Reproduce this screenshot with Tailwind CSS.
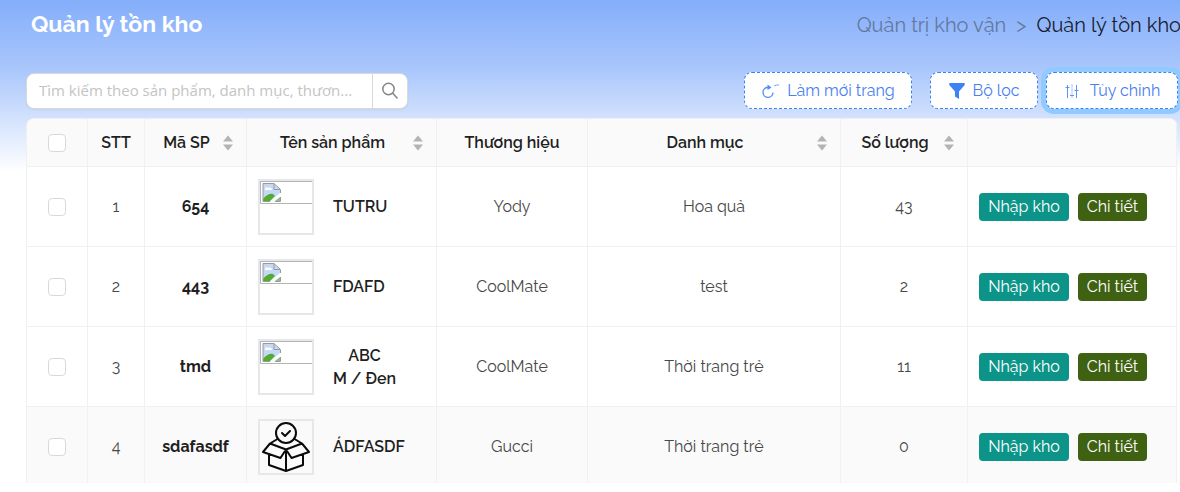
<!DOCTYPE html>
<html lang="vi">
<head>
<meta charset="utf-8">
<meta name="viewport" content="width=device-width, initial-scale=1">
<title>Quản lý tồn kho</title>
<script src="https://cdn.jsdelivr.net/npm/@tailwindcss/browser@4"></script>
</head>
<body class="bg-white font-[Raleway,Lato,'Open_Sans',sans-serif] text-[#1f1f1f]">
<svg class="hidden" xmlns="http://www.w3.org/2000/svg">
  <symbol id="sorter" viewBox="0 0 10 16"><path d="M5 .5 10 6.500H0zM5 15.500 0 9.500h10z" fill="#b3b3b3"/></symbol>
  <symbol id="broken" viewBox="0 0 52 52">
    <path d="M52 .5H.5v22H52" fill="none" stroke="#b5b5b5"/>
    <path d="M3 3h11l6 5v4l-10 8H3z" fill="#c5d8f5"/>
    <path d="M3 20v-2c3-4 7-6 10-5l2 2-5 5z" fill="#55ab32"/>
    <path d="M5 8c0-2 2-2 3-1 2-1 4 0 4 2H5z" fill="#fff"/>
    <path d="M20 16v4h-5z" fill="#8fbf80"/>
    <path d="M3 20.500V2.500h11l6.500 6V12M14 3v5.500h6M20.500 16v4.500H15M3 20.500h7" fill="none" stroke="#9a9a9a"/>
  </symbol>
  <symbol id="box" viewBox="0 0 52 52" fill="none" stroke="#0a0a0a" stroke-width="2" stroke-linejoin="round" stroke-linecap="round">
    <circle cx="26" cy="12" r="10"/><path d="m22 12 3 3 5-5"/>
    <path d="M17.500 18 10 22.500l16 6 16-6L34.500 18M10 22.500 3 31l17.500 6L26 28.500l5.500 8.500L49 31l-7-8.500M9 33.500V44l17 6 17-6V33.500M26 28.500V50"/>
  </symbol>
</svg>
<main class="flex h-screen flex-col overflow-hidden bg-[linear-gradient(#84aefa_0,#a9c6fc_68px,#ffffff_172px)] pr-[3px] pb-[9px] pl-[26px]">
  <header class="flex h-[49px] shrink-0 items-center justify-between pl-[5px] whitespace-nowrap">
    <h1 class="text-[23px] font-bold text-white">Quản lý tồn kho</h1>
    <nav aria-label="Breadcrumb" class="-mr-1 flex gap-2.5 text-xl">
      <a href="#" class="text-[#64779f]">Quản trị kho vận</a><span class="text-[#64779f]">&gt;</span><a href="#" aria-current="page" class="text-[#18202f]">Quản lý tồn kho</a>
    </nav>
  </header>
  <div class="mt-[23px] flex shrink-0 items-center justify-between">
    <form class="flex h-9 w-[382px] rounded-lg border border-[#d9d9d9] bg-white shadow-xs">
      <input type="text" aria-label="Tìm kiếm" placeholder="Tìm kiếm theo sản phẩm, danh mục, thươn..." class="min-w-0 flex-1 rounded-l-lg pl-3 font-['Open_Sans',sans-serif] text-[15px] outline-none placeholder:text-[#c4c4c4]">
      <button type="button" aria-label="Tìm" class="grid w-[35px] place-items-center border-l border-[#d9d9d9]">
        <svg class="size-[18px]" viewBox="0 0 18 18" fill="none" stroke="#858585" stroke-width="1.500"><circle cx="7.500" cy="7" r="5.700"/><path d="m11.500 11 5 5.500"/></svg>
      </button>
    </form>
    <div class="-mr-px flex gap-[18px] text-base text-[#4880f0]">
      <button type="button" class="flex h-[37px] w-[168px] items-center justify-center gap-2 rounded-lg border border-dashed border-[#3b82f6] bg-white">
        <svg class="h-4 w-[18px]" viewBox="0 0 18 16" fill="none" stroke="#4c8df6" stroke-width="1.300"><path d="M6 4.500a5 5 0 1 0 6 5M4.500 4.500H9"/><path d="M6.500 1.500 10.500 4.500 6.500 7z" fill="#4c8df6" stroke="none"/><path d="M13 3q2-1.500 5-1" stroke-width=".8"/></svg>
        Làm mới trang</button>
      <button type="button" class="flex h-[37px] w-[108px] items-center justify-center gap-2 rounded-lg border border-dashed border-[#3b82f6] bg-white">
        <svg class="size-4" viewBox="0 0 16 16" fill="#3b82f6"><path d="M.3 0h15.400v2L10 8.500V16l-4-2.500v-5L.3 2z"/></svg>
        Bộ lọc</button>
      <button type="button" class="-ml-2.5 flex h-[37px] w-[132px] items-center justify-center gap-2.5 rounded-lg border border-dashed border-[#3b82f6] bg-white ring-[5px] ring-[#91caff]">
        <svg class="size-4" viewBox="0 0 16 16" fill="none" stroke="#5b96f7"><path d="M3.500 2v13M1.500 4.500h4M12.500 2v13M10.500 7.500h4"/><path d="M8 1v14" stroke="#a9c8fb"/><path d="M6 12.500h4"/></svg>
        Tùy chỉnh</button>
    </div>
  </div>
  <div class="z-0 mt-[9px] min-h-0 flex-1 overflow-hidden rounded-t-lg border-t border-l border-[#f0f0f0] bg-white">
    <table class="w-full table-fixed border-separate border-spacing-0 text-center text-base [&_td]:h-20 [&_td]:border-r [&_td]:border-b [&_td]:border-[#f0f0f0] [&_td]:p-0 [&_td]:pt-px [&_th]:h-12 [&_th]:border-r [&_th]:border-b [&_th]:border-[#f0f0f0] [&_th]:bg-[#fafafa] [&_th]:p-0 [&_th]:font-semibold">
      <colgroup><col class="w-[61px]"><col class="w-[57px]"><col class="w-[102px]"><col class="w-[190px]"><col class="w-[151px]"><col class="w-[253px]"><col class="w-[127px]"><col></colgroup>
      <thead>
        <tr>
          <th><input type="checkbox" aria-label="Chọn tất cả" class="block mx-auto size-[18px] appearance-none rounded border border-[#d9d9d9] bg-white"></th>
          <th>STT</th>
          <th><div class="flex items-center justify-between pr-[13px] pl-[13px]"><span class="flex-1">Mã SP</span><svg class="ml-2 h-4 w-2.5"><use href="#sorter"/></svg></div></th>
          <th><div class="flex items-center justify-between pr-[13px] pl-[13px]"><span class="flex-1">Tên sản phẩm</span><svg class="ml-2 h-4 w-2.5"><use href="#sorter"/></svg></div></th>
          <th>Thương hiệu</th>
          <th><div class="flex items-center justify-between pr-[13px] pl-[13px]"><span class="flex-1">Danh mục</span><svg class="ml-2 h-4 w-2.5"><use href="#sorter"/></svg></div></th>
          <th><div class="flex items-center justify-between pr-[13px] pl-[13px]"><span class="flex-1">Số lượng</span><svg class="ml-2 h-4 w-2.5"><use href="#sorter"/></svg></div></th>
          <th></th>
        </tr>
      </thead>
      <tbody class="text-[#484848]">
        <tr>
          <td><input type="checkbox" aria-label="Chọn 654" class="block mx-auto size-[18px] appearance-none rounded border border-[#d9d9d9] bg-white"></td>
          <td>1</td><td class="font-bold text-[#1f1f1f]">654</td>
          <td><div class="flex items-center gap-[19px] pl-[11px] font-semibold text-[#1f1f1f]"><svg class="size-14 border-2 border-[#e5e7eb]"><use href="#broken"/></svg><span>TUTRU</span></div></td>
          <td>Yody</td><td>Hoa quả</td><td>43</td>
          <td><div class="flex gap-[9px] pl-[11px] text-white"><button type="button" class="h-7 w-[90px] rounded bg-[#0d9488]">Nhập kho</button><button type="button" class="h-7 w-[69px] rounded bg-[#3f6212]">Chi tiết</button></div></td>
        </tr>
        <tr>
          <td><input type="checkbox" aria-label="Chọn 443" class="block mx-auto size-[18px] appearance-none rounded border border-[#d9d9d9] bg-white"></td>
          <td>2</td><td class="font-bold text-[#1f1f1f]">443</td>
          <td><div class="flex items-center gap-[19px] pl-[11px] font-semibold text-[#1f1f1f]"><svg class="size-14 border-2 border-[#e5e7eb]"><use href="#broken"/></svg><span>FDAFD</span></div></td>
          <td>CoolMate</td><td>test</td><td>2</td>
          <td><div class="flex gap-[9px] pl-[11px] text-white"><button type="button" class="h-7 w-[90px] rounded bg-[#0d9488]">Nhập kho</button><button type="button" class="h-7 w-[69px] rounded bg-[#3f6212]">Chi tiết</button></div></td>
        </tr>
        <tr>
          <td><input type="checkbox" aria-label="Chọn tmd" class="block mx-auto size-[18px] appearance-none rounded border border-[#d9d9d9] bg-white"></td>
          <td>3</td><td class="font-bold text-[#1f1f1f]">tmd</td>
          <td><div class="flex items-center gap-[19px] pl-[11px] font-semibold text-[#1f1f1f]"><svg class="size-14 border-2 border-[#e5e7eb]"><use href="#broken"/></svg><span class="leading-[23px]">ABC<br>M / Đen</span></div></td>
          <td>CoolMate</td><td>Thời trang trẻ</td><td>11</td>
          <td><div class="flex gap-[9px] pl-[11px] text-white"><button type="button" class="h-7 w-[90px] rounded bg-[#0d9488]">Nhập kho</button><button type="button" class="h-7 w-[69px] rounded bg-[#3f6212]">Chi tiết</button></div></td>
        </tr>
        <tr class="bg-[#fafafa]">
          <td><input type="checkbox" aria-label="Chọn sdafasdf" class="block mx-auto size-[18px] appearance-none rounded border border-[#d9d9d9] bg-white"></td>
          <td>4</td><td class="font-bold text-[#1f1f1f]">sdafasdf</td>
          <td><div class="flex items-center gap-[19px] pl-[11px] font-semibold text-[#1f1f1f]"><svg class="size-14 border-2 border-[#e5e7eb]"><use href="#box"/></svg><span>ÁDFASDF</span></div></td>
          <td>Gucci</td><td>Thời trang trẻ</td><td>0</td>
          <td><div class="flex gap-[9px] pl-[11px] text-white"><button type="button" class="h-7 w-[90px] rounded bg-[#0d9488]">Nhập kho</button><button type="button" class="h-7 w-[69px] rounded bg-[#3f6212]">Chi tiết</button></div></td>
        </tr>
      </tbody>
    </table>
  </div>
</main>
</body>
</html>
